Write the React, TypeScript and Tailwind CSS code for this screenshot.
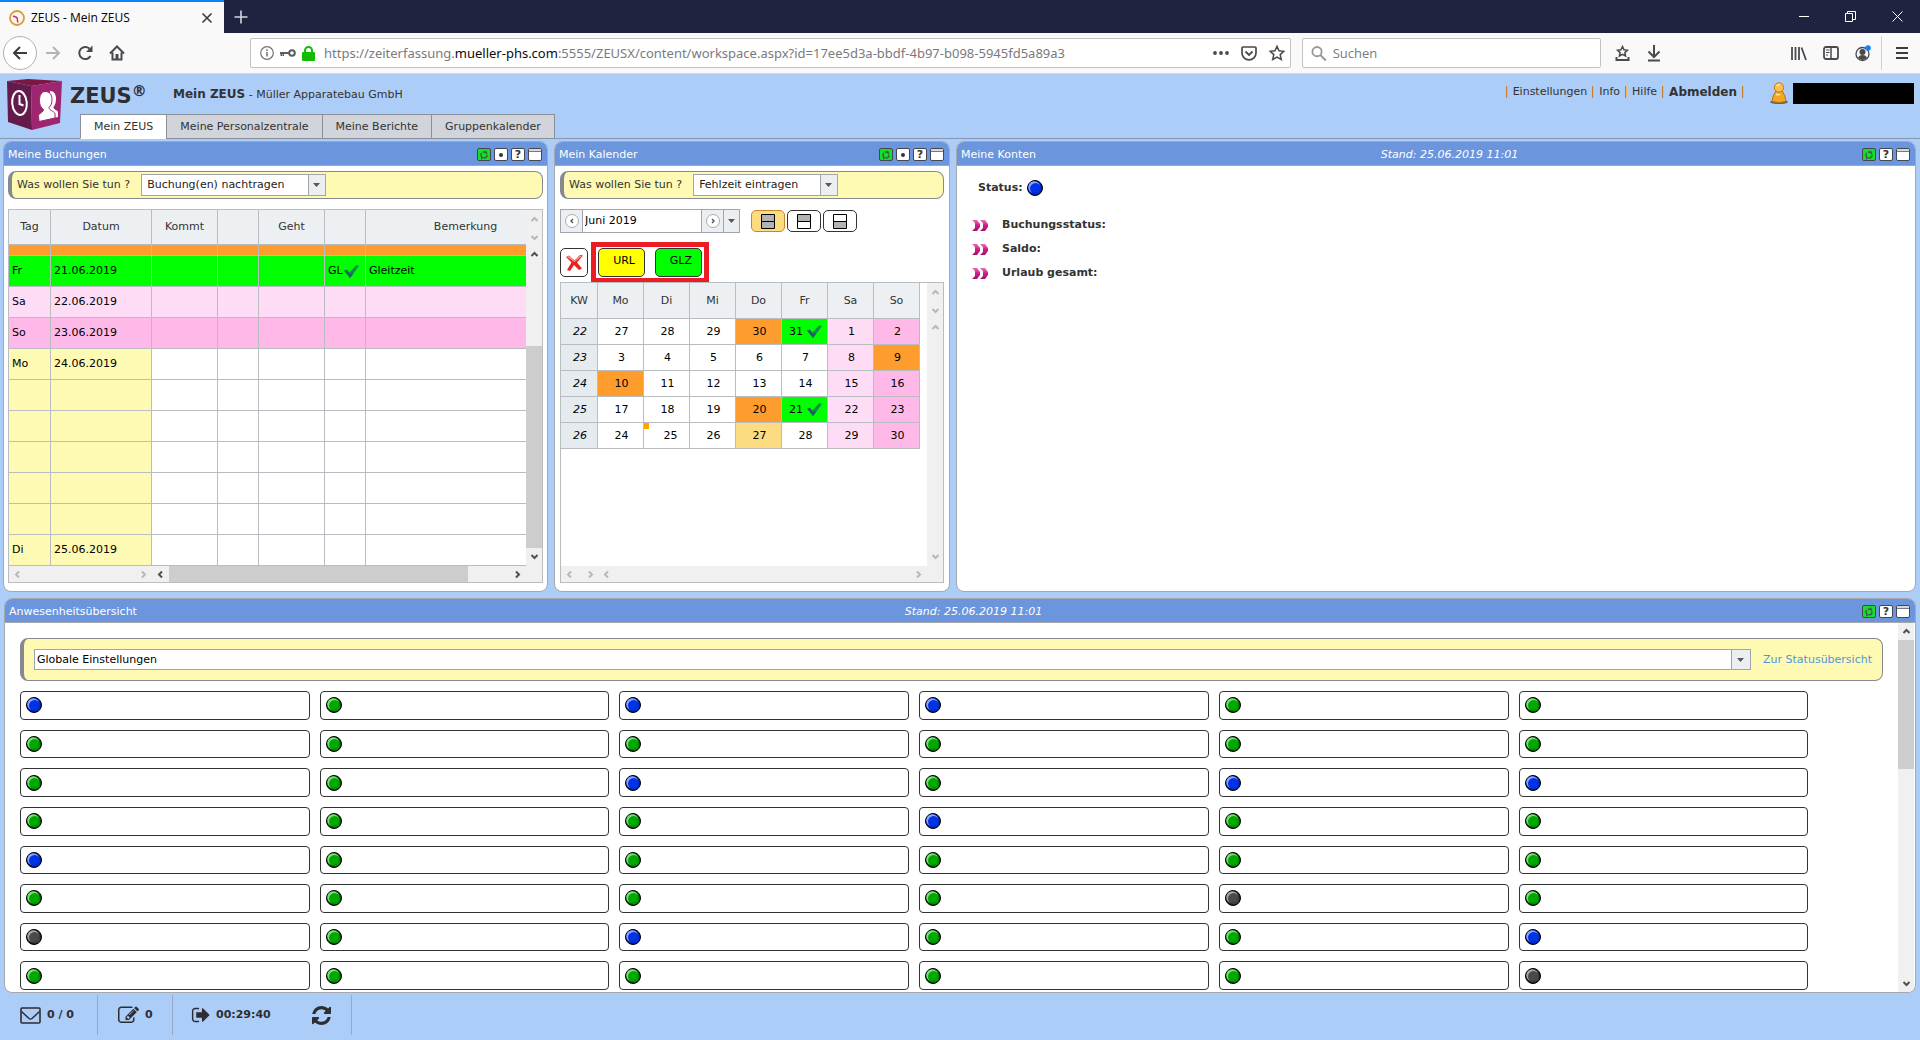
import React from "react";

const BORDER = "border-[#a5a8ad]";

/* ---------- small drawings ---------- */

function Caret() {
  return (
    <svg width="8" height="4" viewBox="0 0 8 4" aria-hidden="true">
      <path d="M0 0h7L3.5 4z" fill="#55585c" />
    </svg>
  );
}

type Dir = "up" | "down" | "left" | "right";
const chevrons: Record<Dir, string> = {
  up: "M1.5 6 4.5 3 7.5 6",
  down: "M1.5 3 4.5 6 7.5 3",
  left: "M6 1.5 3 4.5 6 7.5",
  right: "M3 1.5 6 4.5 3 7.5",
};
function Chevron({ dir, dim = false }: { dir: Dir; dim?: boolean }) {
  return (
    <svg width="9" height="9" viewBox="0 0 9 9" aria-hidden="true" className="shrink-0">
      <path d={chevrons[dir]} fill="none" stroke={dim ? "#b8b8b8" : "#505050"} strokeWidth="2" />
    </svg>
  );
}

function Check() {
  return (
    <svg width="15" height="13" viewBox="0 0 15 13" aria-hidden="true" className="shrink-0">
      <path d="M0 5.500 3 4.500 5.500 7.500 12.500 0 15 1 6 13z" fill="#0e8a4c" />
      <path d="M0 5.500 6 13 9.500 8.500 5.500 9 3 5.500z" fill="#1f5f63" />
    </svg>
  );
}

const lights: Record<string, [string, string, string]> = {
  b: ["#0033e6", "#8aa4ff", "#001f9c"],
  g: ["#00a800", "#7be07b", "#045404"],
  k: ["#4a4a4a", "#a5a5a5", "#222222"],
};
function Light({ kind }: { kind: string }) {
  const [base, hi, lo] = lights[kind];
  return (
    <svg width="16" height="16" viewBox="0 0 16 16" aria-hidden="true" className="shrink-0">
      <circle cx="8" cy="8" r="7.500" fill={lo} stroke="#000" />
      <circle cx="7.300" cy="7.300" r="6" fill={hi} />
      <circle cx="8.600" cy="8.600" r="5.600" fill={base} />
      <path d="M13.500 5A6.800 6.800 0 0 1 5 13.500L12 11.500z" fill={lo} opacity="0.5" />
    </svg>
  );
}

function DoubleArrow() {
  return (
    <svg width="16" height="11" viewBox="0 0 16 11" aria-hidden="true">
      <defs>
        <linearGradient id="arrowPink" x1="0" y1="0" x2="0" y2="1">
          <stop offset="0" stopColor="#e86fb4" />
          <stop offset="0.5" stopColor="#cc1f86" />
          <stop offset="1" stopColor="#a0106a" />
        </linearGradient>
      </defs>
      <path d="M0 0h5l3 4v3l-3 4H0l3-3V3zM8 0h5l3 4v3l-3 4H8l3-3V3z" fill="url(#arrowPink)" />
    </svg>
  );
}

function Logo() {
  return (
    <svg width="55" height="52" viewBox="0 0 55 52" aria-hidden="true">
      <path d="M0 2 21 0 55 2 24 7z" fill="#7a1744" />
      <path d="M0 2 24 7 25 51 1 43z" fill="#641a4a" />
      <path d="M24 7 55 2 53 44 25 51z" fill="#9e2570" />
      <ellipse cx="12.500" cy="24" rx="7.300" ry="12" fill="none" stroke="#fff" strokeWidth="2" transform="rotate(-5 12.500 24)" />
      <path d="M12.500 16v9l4 1.500" fill="none" stroke="#fff" strokeWidth="2" />
      <path d="M43 12c4 0 6 3 6 8 0 4-1 6-2.500 8 0 3 4 3 4.500 5v5l-12 2z" fill="#fff" />
      <path d="M38 12.500c4.500 0 7 3 7 8 0 4-1 6-3 8 0 3 5 3.500 6 6v4.500l-16 3.500-.5-6c1-3 5-3 5-6-3-2-4-5-4-9 0-5 2-9 5.500-9z" fill="#fff" stroke="#9e2570" />
    </svg>
  );
}

/* ---------- shared controls ---------- */

function PanelIcons({ dot = false }: { dot?: boolean }) {
  const box = "flex h-[13px] w-[14px] items-center justify-center overflow-hidden rounded-[2px] border border-[#44474d] bg-white";
  return (
    <div className="flex gap-[3px]">
      <button aria-label="Aktualisieren" className="flex h-[13px] w-[14px] items-center justify-center rounded-[2px] border border-[#44474d] bg-[#12e02c]">
        <svg width="10" height="10" viewBox="0 0 10 10">
          <circle cx="5" cy="5" r="3" fill="none" stroke="#4c5a4c" strokeWidth="1.500" strokeDasharray="5 1.300" />
          <path d="M7 0l1 3H5zM2 7h3l-3 3z" fill="#4c5a4c" />
        </svg>
      </button>
      {dot && (
        <button aria-label="Optionen" className={box}>
          <span className="size-1 rounded-full bg-[#333]" />
        </button>
      )}
      <button aria-label="Hilfe" className={box + " text-[11px] leading-[11px] font-bold text-[#333]"}>?</button>
      <button aria-label="Maximieren" className="flex h-[13px] w-[14px] flex-col rounded-[2px] border border-[#44474d] bg-white">
        <span className="h-[3px] w-full border-b border-[#77797d] bg-[#d8d8d8]" />
      </button>
    </div>
  );
}

function Panel({ title, stand, dot, children }: { title: string; stand?: string; dot?: boolean; children: React.ReactNode }) {
  return (
    <section className={"flex min-w-0 flex-col overflow-hidden rounded-lg border bg-white " + BORDER}>
      <header className={"grid h-6 shrink-0 grid-cols-[1fr_auto_1fr] items-center border-b bg-[#6b95dc] px-1 pt-[2px] pr-[5px] text-white " + BORDER}>
        <h2 className="whitespace-nowrap">{title}</h2>
        <span className="pl-7 italic">{stand}</span>
        <div className="flex justify-end">
          <PanelIcons dot={dot} />
        </div>
      </header>
      {children}
    </section>
  );
}

function TaskSelect({ id, value, wide }: { id: string; value: string; wide?: boolean }) {
  return (
    <div className="flex h-7 items-center gap-[11px] rounded-lg border border-l-4 border-[#868a90] bg-[#fefab4] pl-[5px]">
      <label htmlFor={id}>Was wollen Sie tun ?</label>
      <div className={"relative h-[22px] " + (wide ? "w-[185px]" : "w-[145px]")}>
        <select id={id} className="size-full appearance-none border border-[#a0a4ac] bg-white pl-[5px] text-[#222]">
          <option>{value}</option>
        </select>
        <span className="pointer-events-none absolute inset-y-0 right-0 flex w-[18px] items-center justify-center border border-[#a0a4ac] bg-[#eceff2]">
          <Caret />
        </span>
      </div>
    </div>
  );
}

/* ---------- browser chrome ---------- */

function BrowserBar() {
  return (
    <div className="font-['Open_Sans',sans-serif] text-[12px] leading-4">
      <div className="flex h-[33px] bg-[#202340]">
        <div className="flex w-[224px] items-center border-t-2 border-[#0a84ff] bg-[#f9f9fa] pr-[11px] pl-[9px] text-black">
          <svg width="16" height="16" viewBox="0 0 16 16">
            <circle cx="8" cy="8" r="7" fill="#fffaf0" stroke="#e09a3c" strokeWidth="1.800" />
            <path d="M4 6l4 1.500.8 5" fill="none" stroke="#c22a84" strokeWidth="1.500" />
          </svg>
          <span className="ml-[6px]">ZEUS - Mein ZEUS</span>
          <button aria-label="Tab schließen" className="ml-auto">
            <svg width="12" height="12" viewBox="0 0 12 12"><path d="M1.500 1.500l9 9M10.500 1.500l-9 9" stroke="#3a3a3e" strokeWidth="1.600" /></svg>
          </button>
        </div>
        <button aria-label="Neuer Tab" className="ml-[9px]">
          <svg width="16" height="16" viewBox="0 0 16 16"><path d="M8 1.500v13M1.500 8h13" stroke="#d5d6dc" strokeWidth="1.600" /></svg>
        </button>
        <div className="ml-auto flex items-center gap-9 pr-[17px]">
          <button aria-label="Minimieren"><svg width="10" height="11" viewBox="0 0 10 11"><path d="M0 5.500h10" stroke="#fff" /></svg></button>
          <button aria-label="Verkleinern"><svg width="11" height="11" viewBox="0 0 11 11"><path d="M.5 2.500h7v8h-7zM2.500 2.500v-2h8v8h-3" fill="none" stroke="#fff" /></svg></button>
          <button aria-label="Schließen"><svg width="11" height="11" viewBox="0 0 11 11"><path d="M.5.5l10 10M10.500.5l-10 10" stroke="#fff" /></svg></button>
        </div>
      </div>
      <div className="flex h-[41px] items-center border-b border-[#d8d8da] bg-[#f9f9fa] pr-3 pl-[3px]">
        <button aria-label="Zurück" className="flex size-[34px] items-center justify-center rounded-full border border-[#b0b0b3] bg-white">
          <svg width="16" height="16" viewBox="0 0 16 16"><path d="M15 8H2M8 2L2 8l6 6" fill="none" stroke="#3c3c40" strokeWidth="2" /></svg>
        </button>
        <button aria-label="Vor" className="ml-2">
          <svg width="16" height="16" viewBox="0 0 16 16"><path d="M1 8h13M8 2l6 6-6 6" fill="none" stroke="#b4b4b6" strokeWidth="2" /></svg>
        </button>
        <button aria-label="Neu laden" className="ml-4">
          <svg width="17" height="16" viewBox="0 0 17 16"><path d="M13.500 11A6 6 0 1 1 12.500 3.800" fill="none" stroke="#4a4a4e" strokeWidth="2" /><path d="M15.500.5v6.500H9z" fill="#4a4a4e" /></svg>
        </button>
        <button aria-label="Startseite" className="ml-[15px]">
          <svg width="16" height="16" viewBox="0 0 16 16"><path d="M1 8.500 8 1.500l7 7M3.500 7.500v7h9v-7" fill="none" stroke="#4a4a4e" strokeWidth="2" /><path d="M6.500 15V9h3v6" fill="#4a4a4e" /></svg>
        </button>
        <div className="ml-[125px] flex h-[30px] min-w-0 flex-1 items-center rounded-[2px] border border-[#c2c2c5] bg-white pr-[5px] pl-[9px]">
          <svg width="14" height="14" viewBox="0 0 14 14" className="shrink-0"><circle cx="7" cy="7" r="6.300" fill="none" stroke="#737377" strokeWidth="1.200" /><path d="M7 6v4.500M7 3.300v1.600" stroke="#737377" strokeWidth="1.500" /></svg>
          <svg width="16" height="10" viewBox="0 0 16 10" className="ml-[6px] shrink-0"><circle cx="12" cy="5" r="2.800" fill="none" stroke="#5c5c60" strokeWidth="2" /><path d="M0 4h9v2H4v2H2.500V6H2v2H.5V6H0z" fill="#5c5c60" /></svg>
          <svg width="13" height="15" viewBox="0 0 13 15" className="ml-[6px] shrink-0"><rect y="6" width="13" height="9" rx="1" fill="#12bc00" /><path d="M3 7V4.500a3.500 3.500 0 0 1 7 0V7" fill="none" stroke="#12bc00" strokeWidth="2" /></svg>
          <div className="ml-[9px] min-w-0 flex-1 truncate font-['Noto_Sans',sans-serif] text-[13px] text-[#7a7a7e]">
            https://zeiterfassung.<span className="text-[#0c0c0d]">mueller-phs.com</span>:5555/ZEUSX/content/workspace.aspx?id=17ee5d3a-bbdf-4b97-b098-5945fd5a89a3
          </div>
          <button aria-label="Seitenaktionen"><svg width="16" height="4" viewBox="0 0 16 4"><circle cx="2" cy="2" r="1.900" fill="#4a4a4e" /><circle cx="8" cy="2" r="1.900" fill="#4a4a4e" /><circle cx="14" cy="2" r="1.900" fill="#4a4a4e" /></svg></button>
          <button aria-label="In Pocket speichern" className="ml-3"><svg width="16" height="15" viewBox="0 0 16 15"><path d="M2 1h12q1 0 1 1v5a7 6.800 0 0 1-14 0V2q0-1 1-1z" fill="none" stroke="#4a4a4e" strokeWidth="1.700" /><path d="M4.500 5.500 8 9l3.500-3.500" fill="none" stroke="#4a4a4e" strokeWidth="1.800" /></svg></button>
          <button aria-label="Lesezeichen" className="ml-3"><svg width="16" height="16" viewBox="0 0 16 16"><path d="M8 1.300l2 4.500 4.900.5-3.700 3.300 1.100 4.900L8 12l-4.300 2.500 1.100-4.900L1.100 6.300 6 5.800z" fill="none" stroke="#4a4a4e" strokeWidth="1.500" /></svg></button>
        </div>
        <label className="ml-[11px] flex h-[30px] w-[299px] items-center rounded-[2px] border border-[#c2c2c5] bg-white pl-2">
          <svg width="17" height="17" viewBox="0 0 17 17"><circle cx="6.500" cy="6.500" r="5" fill="none" stroke="#98989b" strokeWidth="2" /><path d="M10 10l6 6" stroke="#98989b" strokeWidth="2.200" /></svg>
          <input aria-label="Suchen" placeholder="Suchen" className="ml-[6px] w-full bg-transparent text-[13px] outline-none placeholder:text-[#7a7a7e]" />
        </label>
        <button aria-label="Lesezeichen anzeigen" className="ml-[14px]"><svg width="15" height="17" viewBox="0 0 15 17"><path d="M7.500 1.500l1.500 3.300 3.400.4-2.500 2.400.7 3.400-3.100-1.700L4.400 11l.7-3.400-2.500-2.400 3.400-.4z" fill="none" stroke="#4a4a4e" strokeWidth="1.500" /><path d="M1.500 12v3h12v-3" fill="none" stroke="#4a4a4e" strokeWidth="2" /></svg></button>
        <button aria-label="Downloads" className="ml-[17px]"><svg width="14" height="17" viewBox="0 0 14 17"><path d="M7 0v12M1.500 6.500 7 12l5.500-5.500M1 15.500h12" fill="none" stroke="#4a4a4e" strokeWidth="2" /></svg></button>
        <div className="ml-[130px] flex items-center gap-4">
          <button aria-label="Bibliothek"><svg width="16" height="15" viewBox="0 0 16 15"><path d="M1 1v13M4.500 1v13M8 1v13M10.500 1.500l4.500 12.500" stroke="#4a4a4e" strokeWidth="1.800" /></svg></button>
          <button aria-label="Seitenleisten"><svg width="16" height="14" viewBox="0 0 16 14"><rect x="1" y="1" width="14" height="12" rx="2" fill="none" stroke="#4a4a4e" strokeWidth="1.800" /><path d="M8 1v12" stroke="#4a4a4e" strokeWidth="1.500" /><path d="M3 4h3.500M3 6.500h3.500M3 9h2" stroke="#4a4a4e" /></svg></button>
          <button aria-label="Konto"><svg width="16" height="17" viewBox="0 0 16 17"><circle cx="7.500" cy="9" r="6.500" fill="none" stroke="#4a4a4e" strokeWidth="1.300" /><circle cx="7.500" cy="7" r="3" fill="#4a4a4e" /><path d="M3 13q1-3 4.500-3t4.500 3q-4.500 4-9 0z" fill="#4a4a4e" /><circle cx="13" cy="3" r="2.800" fill="#0a84ff" /></svg></button>
        </div>
        <div className="ml-[10px] h-[34px] border-l border-[#d0d0d2] pl-[14px]">
          <button aria-label="Menü" className="h-full"><svg width="12" height="14" viewBox="0 0 12 14"><path d="M0 2h12M0 7h12M0 12h12" stroke="#3c3c40" strokeWidth="2" /></svg></button>
        </div>
      </div>
    </div>
  );
}

/* ---------- application header ---------- */

function Sep() {
  return <span className="h-3 w-[2px] border-r border-[#f3b45a] bg-[#c77f2c]" />;
}

function AppHeader() {
  const tabs = ["Mein ZEUS", "Meine Personalzentrale", "Meine Berichte", "Gruppenkalender"];
  return (
    <header className="flex h-[65px] items-stretch border-b border-[#8496b4] pl-[7px]">
      <div className="pt-[5px]">
        <Logo />
      </div>
      <div className="flex flex-1 flex-col justify-between">
        <div className="flex pl-2">
          <h1 className="flex w-[103px] pt-[10px] text-[21px] leading-6 font-bold text-[#2d2d33]">
            ZEUS<span className="text-[15px] leading-[14px]">®</span>
          </h1>
          <p className="pt-3">
            <b className="text-[12px]">Mein ZEUS</b> - Müller Apparatebau GmbH
          </p>
        </div>
        <nav className="flex pl-[18px]">
          {tabs.map((t, i) => (
            <a
              key={t}
              href="#"
              className={
                "-mb-px flex h-[25px] items-center border border-[#8b8f98] px-[13px] " +
                (i === 0 ? "border-b-white bg-white" : "-ml-px bg-[#d1d4da]")
              }
            >
              {t}
            </a>
          ))}
        </nav>
      </div>
      <div className="flex h-9 items-center gap-[5px]">
        <Sep />
        <a href="#">Einstellungen</a>
        <Sep />
        <a href="#">Info</a>
        <Sep />
        <a href="#">Hilfe</a>
        <Sep />
        <a href="#" className="text-[12px] font-bold">Abmelden</a>
        <Sep />
      </div>
      <div className="flex h-[38px] items-center gap-[5px] pr-[6px] pl-[26px]">
        <svg width="18" height="22" viewBox="0 0 18 22" aria-hidden="true">
          <ellipse cx="9" cy="20" rx="9" ry="2" fill="#5d6470" />
          <path d="M6 9h6q3.500 4 4 10.500-7 2-14 0Q2.500 13 6 9z" fill="#f5a623" stroke="#b9730f" />
          <circle cx="9" cy="5.500" r="4.700" fill="#fbc04e" stroke="#c27b14" />
          <path d="M6 12q3 1.500 4 0M7 4q1-2 3-1.500" fill="none" stroke="#ffe7a8" strokeWidth="1.500" />
        </svg>
        <span className="h-[21px] w-[121px] bg-black" />
      </div>
    </header>
  );
}

/* ---------- Meine Buchungen ---------- */

const bookingRows: { day?: string; date?: string; row: string; label: string; code?: string; note?: string }[] = [
  { day: "Fr", date: "21.06.2019", row: "bg-[#00ff00]", label: "", code: "GL", note: "Gleitzeit" },
  { day: "Sa", date: "22.06.2019", row: "bg-[#ffdcf5]", label: "" },
  { day: "So", date: "23.06.2019", row: "bg-[#ffb9e8]", label: "" },
  { day: "Mo", date: "24.06.2019", row: "bg-white", label: "bg-[#fefab4]" },
  { row: "bg-white", label: "bg-[#fefab4]" },
  { row: "bg-white", label: "bg-[#fefab4]" },
  { row: "bg-white", label: "bg-[#fefab4]" },
  { row: "bg-white", label: "bg-[#fefab4]" },
  { row: "bg-white", label: "bg-[#fefab4]" },
  { day: "Di", date: "25.06.2019", row: "bg-white", label: "bg-[#fefab4]" },
];

function Bookings() {
  const cell = "border-r border-b border-[#b9bcc1] px-[3px] text-left font-normal";
  const heads = ["Tag", "Datum", "Kommt", "", "Geht", "", "Bemerkung"];
  return (
    <div className="flex flex-1 flex-col gap-[10px] px-1 pt-[5px] pb-2">
      <TaskSelect id="booking-task" value="Buchung(en) nachtragen" wide />
      <div className="flex border border-[#b9bcc1]">
        <div className="flex min-w-0 flex-1 flex-col justify-between">
          <div className="overflow-hidden">
            <table className="w-[557px] table-fixed border-separate border-spacing-0 text-black">
              <colgroup>
                <col className="w-[42px]" />
                <col className="w-[101px]" />
                <col className="w-[66px]" />
                <col className="w-[41px]" />
                <col className="w-[66px]" />
                <col className="w-[41px]" />
                <col />
              </colgroup>
              <thead>
                <tr className="h-[35px] bg-[#ecf0f3] text-[#333]">
                  {heads.map((h, i) => (
                    <th key={i} className="border-r border-b border-[#b9bcc1] p-0 font-normal">{h}</th>
                  ))}
                </tr>
              </thead>
              <tbody>
                <tr className="h-[11px] bg-[#ff9c2e]">
                  {heads.map((_, i) => (
                    <td key={i} className="border-r border-b border-[#b9bcc1] p-0" />
                  ))}
                </tr>
                {bookingRows.map((r, i) => (
                  <tr key={i} className={"h-[31px] " + r.row}>
                    <td className={cell + " " + r.label}>{r.day}</td>
                    <td className={cell + " " + r.label}>{r.date}</td>
                    <td className={cell} />
                    <td className={cell} />
                    <td className={cell} />
                    <td className={cell}>
                      {r.code && (
                        <span className="flex items-center gap-px">
                          {r.code}
                          <Check />
                        </span>
                      )}
                    </td>
                    <td className={cell}>{r.note}</td>
                  </tr>
                ))}
              </tbody>
            </table>
          </div>
          <div className="flex h-4 bg-[#f0f0f0]">
            <div className="flex w-[143px] items-center justify-between px-1">
              <Chevron dir="left" dim />
              <Chevron dir="right" dim />
            </div>
            <div className="flex flex-1 items-center gap-1 px-1">
              <Chevron dir="left" />
              <div className="h-4 flex-1">
                <div className="h-full w-[88%] bg-[#cdcdcd]" />
              </div>
              <Chevron dir="right" />
            </div>
          </div>
        </div>
        <div className="flex w-4 flex-col items-center bg-[#f0f0f0] pt-[5px] pb-[21px]">
          <Chevron dir="up" dim />
          <span className="h-[9px]" />
          <Chevron dir="down" dim />
          <span className="h-2" />
          <Chevron dir="up" />
          <div className="flex w-full flex-1 flex-col justify-end pt-1 pb-1">
            <div className="h-[71%] w-full bg-[#cdcdcd]" />
          </div>
          <Chevron dir="down" />
        </div>
      </div>
    </div>
  );
}

/* ---------- Mein Kalender ---------- */

const weeks: [number, number[]][] = [
  [22, [27, 28, 29, 30, 31, 1, 2]],
  [23, [3, 4, 5, 6, 7, 8, 9]],
  [24, [10, 11, 12, 13, 14, 15, 16]],
  [25, [17, 18, 19, 20, 21, 22, 23]],
  [26, [24, 25, 26, 27, 28, 29, 30]],
];
const marks: Record<string, string> = {
  "22-3": "bg-[#ff9c2e]",
  "22-4": "bg-[#00ff00]",
  "23-6": "bg-[#ff9c2e]",
  "24-0": "bg-[#ff9c2e]",
  "25-3": "bg-[#ff9c2e]",
  "25-4": "bg-[#00ff00]",
  "26-3": "bg-[#fddb80]",
};

function Halves({ top, bottom }: { top: string; bottom: string }) {
  return (
    <svg width="14" height="15" viewBox="0 0 14 15" aria-hidden="true">
      <path d="M.5.500h13v7H.5z" fill={top} stroke="#000" />
      <path d="M.5 7.500h13v7H.5z" fill={bottom} stroke="#000" />
    </svg>
  );
}

function RoundArrow({ dir, label }: { dir: Dir; label: string }) {
  return (
    <button aria-label={label} className="flex w-[22px] items-center justify-center bg-[#eceff2]">
      <span className="flex size-[14px] items-center justify-center rounded-full border border-[#a9adb3] bg-white">
        <svg width="6" height="6" viewBox="0 0 9 9"><path d={chevrons[dir]} fill="none" stroke="#505050" strokeWidth="2" /></svg>
      </span>
    </button>
  );
}

function Calendar() {
  const view = "flex h-[22px] w-[34px] items-center justify-center rounded-[5px] border ";
  const type = "flex h-[29px] w-[47px] items-center justify-end rounded-[5px] border border-[#333] pr-[9px] pb-[3px] text-black ";
  return (
    <div className="flex flex-1 flex-col px-[5px] pt-[5px] pb-2">
      <TaskSelect id="calendar-task" value="Fehlzeit eintragen" />
      <div className="mt-[10px] flex items-center">
        <div className="flex h-6 w-[180px] divide-x divide-[#a0a4ac] border border-[#a0a4ac]">
          <RoundArrow dir="left" label="Vorheriger Monat" />
          <input aria-label="Monat" defaultValue="Juni 2019" className="min-w-0 flex-1 bg-white pl-[2px] text-black outline-none" />
          <RoundArrow dir="right" label="Nächster Monat" />
          <button aria-label="Monat wählen" className="flex w-[15px] items-center justify-center bg-[#eceff2]"><Caret /></button>
        </div>
        <div className="ml-[11px] flex gap-[2px]">
          <button aria-label="Ganzer Tag" className={view + "border-[#c8862e] bg-[#fddb80]"}><Halves top="#b3b3b3" bottom="#b3b3b3" /></button>
          <button aria-label="Erste Tageshälfte" className={view + "border-[#333] bg-white"}><Halves top="#b3b3b3" bottom="#fff" /></button>
          <button aria-label="Zweite Tageshälfte" className={view + "border-[#333] bg-white"}><Halves top="#fff" bottom="#b3b3b3" /></button>
        </div>
      </div>
      <div className="mt-[9px] flex items-center">
        <button aria-label="Löschen" className="flex h-[29px] w-7 items-center justify-center rounded-[5px] border border-[#333] bg-white">
          <svg width="17" height="16" viewBox="0 0 17 16"><path d="M0 2 3 .5 8.500 5.500 14 0l3 .5-6 7 5 6-3 1.500-5-5-4 6-3-1 4.500-7.500z" fill="#e8231c" /><path d="M1 2l2-1 5.500 5L14 .7l2 .3-7.500 6z" fill="#ff9a90" /></svg>
        </button>
        <div className="ml-[3px] flex gap-[10px] border-[5px] border-[#ec1c24] p-[1px] px-[2px]">
          <button className={type + "bg-[#ffff00]"}>URL</button>
          <button className={type + "bg-[#00ff00]"}>GLZ</button>
        </div>
      </div>
      <div className="-mt-px flex flex-1 border border-[#b9bcc1]">
        <div className="flex min-w-0 flex-1 flex-col justify-between">
          <div className="overflow-hidden">
            <table className="w-[359px] table-fixed border-separate border-spacing-0 text-center text-black">
              <colgroup>
                <col className="w-[37px]" />
              </colgroup>
              <thead>
                <tr className="h-9 bg-[#ecf0f3] text-[#333]">
                  {["KW", "Mo", "Di", "Mi", "Do", "Fr", "Sa", "So"].map((h) => (
                    <th key={h} className="border-r border-b border-[#b9bcc1] p-0 font-normal">{h}</th>
                  ))}
                </tr>
              </thead>
              <tbody>
                {weeks.map(([kw, days]) => (
                  <tr key={kw} className="h-[26px]">
                    <th className="border-r border-b border-[#b9bcc1] bg-[#e6ebef] p-0 pl-[2px] font-normal italic">{kw}</th>
                    {days.map((d, i) => {
                      const bg = marks[kw + "-" + i] ?? (i === 5 ? "bg-[#ffdcf5]" : i === 6 ? "bg-[#ffb9e8]" : "bg-white");
                      const today = kw === 26 && i === 1;
                      return (
                        <td key={i} className={"relative border-r border-b border-[#b9bcc1] p-0 " + bg + (today ? " pl-2" : " pl-[2px]")}>
                          {today && <span className="absolute top-0 left-0 h-[6px] w-[5px] bg-[#ffa500]" />}
                          {bg === "bg-[#00ff00]" ? (
                            <span className="flex items-center justify-center gap-1">
                              {d}
                              <Check />
                            </span>
                          ) : (
                            d
                          )}
                        </td>
                      );
                    })}
                  </tr>
                ))}
              </tbody>
            </table>
          </div>
          <div className="flex h-4 items-center bg-[#f0f0f0] px-1">
            <Chevron dir="left" dim />
            <span className="w-3" />
            <Chevron dir="right" dim />
            <span className="w-[7px]" />
            <Chevron dir="left" dim />
            <span className="flex-1" />
            <Chevron dir="right" dim />
          </div>
        </div>
        <div className="flex w-4 flex-col items-center bg-[#f0f0f0] pt-[5px] pb-[21px]">
          <Chevron dir="up" dim />
          <span className="h-[9px]" />
          <Chevron dir="down" dim />
          <span className="h-2" />
          <Chevron dir="up" dim />
          <span className="flex-1" />
          <Chevron dir="down" dim />
        </div>
      </div>
    </div>
  );
}

/* ---------- Anwesenheitsübersicht ---------- */

const presence = ["bgbbgg", "gggggg", "ggbgbb", "gggbgg", "bggggg", "ggggkg", "kgbggb", "gggggk"];

function Presence() {
  return (
    <div className="flex flex-1 pr-px">
      <div className="flex flex-1 flex-col px-[15px] pt-[15px] pb-[2px]">
        <div className="flex h-[43px] items-center gap-3 rounded-lg border border-l-4 border-[#868a90] bg-[#fefab4] pr-[10px] pl-[10px]">
          <div className="relative h-[21px] flex-1">
            <select aria-label="Ansicht" className="size-full appearance-none border border-[#a0a4ac] bg-white pl-[2px] text-black">
              <option>Globale Einstellungen</option>
            </select>
            <span className="pointer-events-none absolute inset-y-0 right-0 flex w-5 items-center justify-center border border-[#a0a4ac] bg-[#eceff2]">
              <Caret />
            </span>
          </div>
          <a href="#" className="text-[#4f97dc]">Zur Statusübersicht</a>
        </div>
        <div className="mt-[10px] grid w-[96%] flex-1 grid-cols-6 grid-rows-8 gap-[10px]">
          {presence.join("").split("").map((k, i) => (
            <div key={i} className="flex items-center rounded-[4px] border border-[#333] pl-[5px]">
              <Light kind={k} />
            </div>
          ))}
        </div>
      </div>
      <div className="flex w-4 flex-col items-center bg-[#f0f0f0] py-1">
        <Chevron dir="up" />
        <div className="w-full flex-1 pt-1">
          <div className="h-[38%] bg-[#cdcdcd]" />
        </div>
        <Chevron dir="down" />
      </div>
    </div>
  );
}

/* ---------- status bar ---------- */

function StatusBar() {
  const item = "flex h-10 items-center gap-[6px] border-r border-[#98a9c4] ";
  return (
    <footer className="flex h-[47px] items-center pb-[3px] pl-5 text-[11px] font-bold text-[#2d2d33]">
      <div className={item + "w-[78px]"}>
        <svg width="21" height="17" viewBox="0 0 21 17" aria-hidden="true"><rect x="1" y="1" width="19" height="15" rx="1" fill="none" stroke="#2d2d33" strokeWidth="1.600" /><path d="M1.500 4.500l7.500 7q1.500 1 3 0l7.500-7" fill="none" stroke="#2d2d33" strokeWidth="1.500" /></svg>
        0 / 0
      </div>
      <div className={item + "w-[75px] pl-5"}>
        <svg width="21" height="21" viewBox="0 0 1792 1792" fill="#2d2d33" aria-hidden="true"><path d="M888 1184l116-116-152-152-116 116v56h96v96h56zm440-720q-16-16-33 1l-350 350q-17 17-1 33t33-1l350-350q17-17 1-33zm80 594v190q0 119-84.500 203.500t-203.500 84.500h-832q-119 0-203.500-84.500t-84.500-203.500v-832q0-119 84.500-203.500t203.500-84.500h832q63 0 117 25 15 7 18 23 3 17-9 29l-49 49q-14 14-32 8-23-6-45-6h-832q-66 0-113 47t-47 113v832q0 66 47 113t113 47h832q66 0 113-47t47-113v-126q0-13 9-22l64-64q15-15 35-7t20 29zm-96-738l288 288-672 672h-288v-288zm444 132l-92 92-288-288 92-92q28-28 68-28t68 28l152 152q28 28 28 68t-28 68z" /></svg>
        0
      </div>
      <div className={item + "w-[179px] pl-[18px]"}>
        <svg width="19" height="20" viewBox="0 0 1664 1792" fill="#2d2d33" aria-hidden="true"><path d="M704 1440q0 4 1 20t.5 26.500-3 23.500-10 19.500-20.500 6.500h-320q-119 0-203.500-84.500t-84.500-203.500v-704q0-119 84.500-203.500t203.500-84.500h320q13 0 22.500 9.500t9.500 22.500q0 4 1 20t.5 26.500-3 23.500-10 19.500-20.500 6.500h-320q-66 0-113 47t-47 113v704q0 66 47 113t113 47h312l11.500 1 11.500 3 8 5.500 7 9 2 13.500zm928-544q0 26-19 45l-544 544q-19 19-45 19t-45-19-19-45v-288h-448q-26 0-45-19t-19-45v-384q0-26 19-45t45-19h448v-288q0-26 19-45t45-19 45 19l544 544q19 19 19 45z" /></svg>
        00:29:40
        <button aria-label="Aktualisieren" className="mr-5 ml-auto">
          <svg width="19" height="19" viewBox="0 0 1536 1536" fill="#2d2d33"><path d="M1511 928q0 5-1 7-64 268-268 434.500t-478 166.500q-146 0-282.500-55t-243.500-157l-129 129q-19 19-45 19t-45-19-19-45v-448q0-26 19-45t45-19h448q26 0 45 19t19 45-19 45l-137 137q71 66 161 102t187 36q134 0 250-65t186-179q11-17 53-117 8-23 30-23h192q13 0 22.500 9.500t9.500 22.500zm25-800v448q0 26-19 45t-45 19h-448q-26 0-45-19t-19-45 19-45l138-138q-148-137-349-137-134 0-250 65t-186 179q-11 17-53 117-8 23-30 23h-199q-13 0-22.500-9.500t-9.500-22.500v-7q65-268 270-434.500t480-166.500q146 0 284 55.500t245 156.500l130-129q19-19 45-19t45 19 19 45z" /></svg>
        </button>
      </div>
    </footer>
  );
}

export default function App() {
  return (
    <div className="flex min-h-screen flex-col bg-[#accdf7] font-['DejaVu_Sans',sans-serif] text-[11px] leading-4 text-[#333]">
      <BrowserBar />
      <AppHeader />
      <main className="flex flex-1 flex-col gap-[6px] pt-[2px]">
        <div className="grid grid-cols-[545fr_396fr_960fr] gap-[6px] pr-1 pl-[3px]">
          <Panel title="Meine Buchungen" dot>
            <Bookings />
          </Panel>
          <Panel title="Mein Kalender" dot>
            <Calendar />
          </Panel>
          <Panel title="Meine Konten" stand="Stand: 25.06.2019 11:01">
            <div className="px-[15px] pt-[14px] font-bold">
              <p className="flex items-center gap-1 pl-[6px]">
                Status: <Light kind="b" />
              </p>
              <ul className="mt-[17px]">
                {["Buchungsstatus:", "Saldo:", "Urlaub gesamt:"].map((t) => (
                  <li key={t} className="flex h-6 items-center gap-[14px]">
                    <DoubleArrow />
                    {t}
                  </li>
                ))}
              </ul>
            </div>
          </Panel>
        </div>
        <div className="grid flex-1 pr-1 pl-1">
          <Panel title="Anwesenheitsübersicht" stand="Stand: 25.06.2019 11:01">
            <Presence />
          </Panel>
        </div>
      </main>
      <StatusBar />
    </div>
  );
}
